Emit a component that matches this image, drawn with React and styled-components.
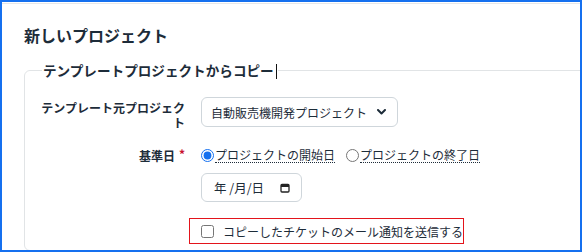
import React from 'react';
import styled, { createGlobalStyle } from 'styled-components';

const GlobalStyle = createGlobalStyle`
  body {
    margin: 0;
    font-family: 'Noto Sans CJK JP', 'Noto Sans', sans-serif;
    color: #1d2c39;
    background: #fff;
  }
`;

const Frame = styled.div`
  width: 582px;
  height: 252px;
  box-sizing: border-box;
  border: 2px solid #1570ef;
  overflow: hidden;
`;

const Page = styled.div`
  margin-top: 1px;
  border-top: 1px solid #e6e7e8;
  padding: 21px 0 0 22px;
`;

const Title = styled.h2`
  margin: 0;
  font-size: 16px;
  line-height: 20px;
  font-weight: 700;
`;

const Fieldset = styled.fieldset`
  margin: 16px 0 0 0;
  width: 640px;
  height: 190px;
  box-sizing: border-box;
  padding: 0;
  border: 1px solid #e1e4e6;
  border-radius: 6px;
`;

const Legend = styled.legend`
  margin-left: 17px;
  padding: 0 1px;
  font-size: 13.6px;
  line-height: 18px;
  font-weight: 700;
`;

const Caret = styled.span`
  display: inline-block;
  width: 0;
  height: 15px;
  margin-left: 2px;
  vertical-align: -3px;
  border-left: 1px solid #111;
`;

const Form = styled.div`
  padding: 18px 0 0 14px;
  display: flex;
  flex-direction: column;
`;

const Row = styled.div`
  display: grid;
  grid-template-columns: 146px 1fr;
  column-gap: 16px;
  align-items: ${(p) => (p.$top ? 'start' : 'center')};
  margin-top: ${(p) => p.$mt || 0}px;
`;

const Label = styled.label`
  text-align: right;
  font-size: 12px;
  line-height: 15px;
  font-weight: 700;
  padding-top: ${(p) => p.$pt || 0}px;
`;

const Required = styled.span`
  color: #c8102e;
  margin-left: 4px;
  position: relative;
  top: -2px;
`;

const SelectBox = styled.div`
  width: 197px;
  height: 30px;
  box-sizing: border-box;
  border: 1px solid #cfd6db;
  border-radius: 6px;
  padding: 0 11px 0 9px;
  display: flex;
  align-items: center;
  justify-content: space-between;
  font-size: 12px;
`;

const Radios = styled.div`
  display: flex;
  align-items: center;
  height: 20px;
  gap: 11px;
`;

const RadioItem = styled.label`
  display: flex;
  align-items: center;
  font-size: 12px;
  line-height: 16px;

  input {
    margin: 0 1px 0 0;
    width: 13px;
    height: 13px;
    accent-color: #1570ef;
  }
`;

const Dotted = styled.span`
  border-bottom: 1px dotted #1d2c39;
  line-height: 15px;
`;

const DateBox = styled.div`
  width: 101px;
  height: 29px;
  box-sizing: border-box;
  border: 1px solid #cfd6db;
  border-radius: 6px;
  padding: 0 11px 0 12px;
  display: flex;
  align-items: center;
  justify-content: space-between;
  font-size: 12.5px;
`;

const Highlight = styled.label`
  justify-self: start;
  margin-left: -12px;
  width: max-content;
  height: 26px;
  box-sizing: border-box;
  border: 1px solid #e3141b;
  padding: 0 0 0 11px;
  display: flex;
  align-items: center;
  gap: 9px;
  font-size: 12px;
  white-space: nowrap;

  input {
    margin: 0;
    width: 13px;
    height: 13px;
  }
`;

const Chevron = () => (
  <svg width="9" height="6" viewBox="0 0 9 6">
    <path d="M1 1l3.5 3.5L8 1" fill="none" stroke="#1d2c39" strokeWidth="2" strokeLinecap="round" strokeLinejoin="round" />
  </svg>
);

const CalendarIcon = () => (
  <svg width="10" height="10" viewBox="0 0 10 10">
    <rect x="1" y="1.5" width="8" height="7.5" rx="1" fill="none" stroke="#222" strokeWidth="1.3" />
    <rect x="1" y="1.5" width="8" height="2.5" fill="#222" />
  </svg>
);

export default function App() {
  return (
    <>
      <GlobalStyle />
      <Frame>
        <Page>
          <Title>新しいプロジェクト</Title>
          <Fieldset>
            <Legend>
              テンプレートプロジェクトからコピー
              <Caret />
            </Legend>
            <Form>
              <Row $top>
                <Label $pt={3}>テンプレート元プロジェクト</Label>
                <SelectBox>
                  <span>自動販売機開発プロジェクト</span>
                  <Chevron />
                </SelectBox>
              </Row>
              <Row $mt={15}>
                <Label>
                  基準日<Required>*</Required>
                </Label>
                <Radios>
                  <RadioItem>
                    <input type="radio" name="base" defaultChecked />
                    <Dotted>プロジェクトの開始日</Dotted>
                  </RadioItem>
                  <RadioItem>
                    <input type="radio" name="base" />
                    <Dotted>プロジェクトの終了日</Dotted>
                  </RadioItem>
                </Radios>
              </Row>
              <Row $mt={8}>
                <span />
                <DateBox>
                  <span>年 /月/日</span>
                  <CalendarIcon />
                </DateBox>
              </Row>
              <Row $mt={16}>
                <span />
                <Highlight>
                  <input type="checkbox" />
                  コピーしたチケットのメール通知を送信する
                </Highlight>
              </Row>
            </Form>
          </Fieldset>
        </Page>
      </Frame>
    </>
  );
}
